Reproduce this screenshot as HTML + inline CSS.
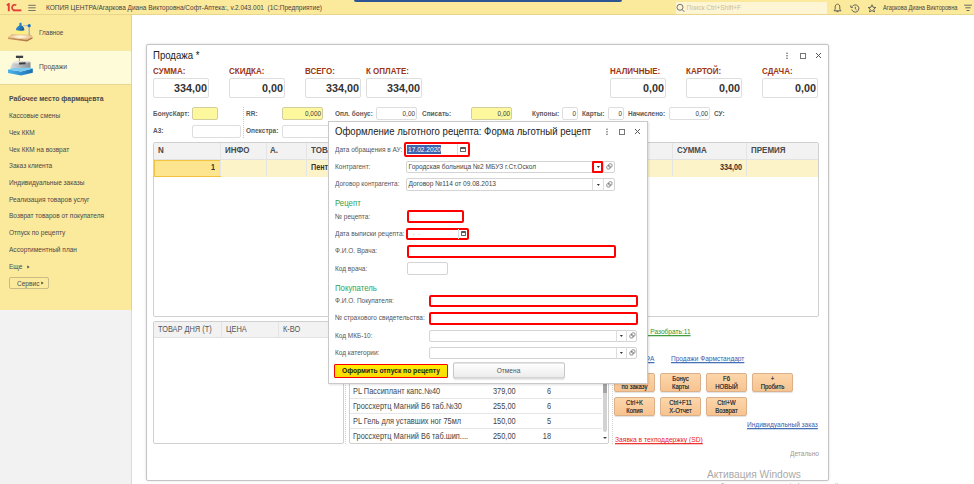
<!DOCTYPE html>
<html><head><meta charset="utf-8">
<style>
*{margin:0;padding:0;box-sizing:border-box}
html,body{width:974px;height:484px;overflow:hidden;background:#fff;font-family:"Liberation Sans",sans-serif;color:#333}
.a{position:absolute;white-space:nowrap}
#top{left:0;top:0;width:974px;height:15px;background:#fbe99c;border-bottom:1px solid #e9d68b}
#side{left:0;top:15px;width:132px;height:295px;background:#fbe99c;border-right:1px solid #e6d48e}
#sidegrey{left:0;top:310px;width:132px;height:174px;background:#f2f2f2;border-right:1px solid #e3dcb8}
.si{position:absolute;left:9px;font-size:6.55px;color:#4a4a4a;line-height:8px}
.box{position:absolute;background:#fff;border:1px solid #dedede;border-radius:2px}
.yb{background:#fdf79e;border-color:#d2cf9c}
.lbl{position:absolute;font-size:6.5px;color:#5a5a5a;font-weight:bold;line-height:8px}
.red{position:absolute;color:#9c3714;font-weight:bold;font-size:8px;line-height:9px}
.big{position:absolute;font-size:10.8px;font-weight:bold;color:#333;text-align:right;line-height:12px}
.sv{position:absolute;font-size:6.4px;color:#444;text-align:right;line-height:8px}
.th{position:absolute;top:146.5px;font-size:8px;font-weight:bold;color:#4a4a4a;line-height:8px}
.th2{position:absolute;top:326px;font-size:7.4px;color:#555;line-height:8px}
.td{position:absolute;top:164px;font-size:7.2px;font-weight:bold;color:#333;line-height:8px}
.rt{position:absolute;font-size:7.4px;color:#444;line-height:8px}
.lnk{position:absolute;font-size:6.55px;line-height:8px;text-decoration:underline;text-decoration-thickness:0.6px;text-underline-offset:0.8px}
.btn{position:absolute;width:41px;height:19px;border:1px solid #dcb088;border-radius:2px;background:linear-gradient(#fcd6aa,#f7c391);box-shadow:0 1px 1px rgba(0,0,0,0.12);font-size:6px;line-height:6.8px;text-align:center;color:#333;padding-top:2.3px;text-shadow:0 0 0.4px #555}
.btn .ts{transform-origin:0 50%}
.dl{position:absolute;left:335px;font-size:6.5px;color:#555;line-height:8px}
.dv{position:absolute;font-size:6.6px;color:#444;line-height:8px}
.rb{position:absolute;border:2px solid #ff0000;border-radius:2px;background:#fff}
.ib{position:absolute;border:1px solid #d4d4d4;border-radius:2px;background:#fff}
.gh{position:absolute;left:335px;font-size:7.8px;color:#35a050;line-height:9px}
.arr{position:absolute;width:0;height:0;border-left:1.6px solid transparent;border-right:1.6px solid transparent;border-top:1.8px solid #333}
.lk{position:absolute;width:5px;height:5px;border:1px solid #777;border-radius:1px;box-shadow:1.5px -1.5px 0 -0.5px #fff,1.5px -1.5px 0 0 #777}
.cal{position:absolute;width:5.5px;height:5px;border:1px solid #666;border-top:2px solid #555;border-radius:1px}
.t{transform:scaleY(1.15);transform-origin:0 80%}
.t.big{transform:scaleY(1.04)}
.ts{display:inline-block;transform:scaleY(1.15);transform-origin:0 80%}
</style></head><body>
<!-- top bar -->
<div class="a" id="top"></div>
<div class="a" style="left:354px;top:0;width:268px;height:2px;background:#2d5594;border-radius:0 0 3px 3px"></div>
<svg class="a" style="left:6px;top:3px" width="16" height="9" viewBox="0 0 16 9"><path d="M0.8 2.3L2.8 1V8.2" stroke="#e2413a" stroke-width="1.9" fill="none"/><path d="M10.3 2.2A2.8 2.8 0 1 0 8.2 7.3" stroke="#e2413a" stroke-width="1.7" fill="none"/><rect x="7.4" y="6.4" width="8" height="1.9" fill="#e2413a"/></svg>
<svg class="a" style="left:28px;top:4px" width="8" height="8" viewBox="0 0 8 8"><path d="M0.3 1.3H7.7M0.3 3.8H7.7M0.3 6.5H7.7" stroke="#666" stroke-width="0.9"/></svg>
<div class="t a" style="left:46px;top:4px;font-size:6.5px;color:#444;line-height:8px;white-space:pre">КОПИЯ ЦЕНТРА/Агаркова Диана Викторовна/Софт-Аптека:, v.2.043.001  (1С:Предприятие)</div>
<div class="a" style="left:676px;top:2px;width:151px;height:12px;background:#fdf5d4"></div>
<div class="t a" style="left:686.5px;top:4px;font-size:6.5px;color:#c8c0a0;line-height:8px">Поиск Ctrl+Shift+F</div>
<div class="t a" style="left:883px;top:4px;font-size:5.7px;color:#444;line-height:8px">Агаркова Диана Викторовна</div>


<svg class="a" style="left:833px;top:3px" width="9" height="10" viewBox="0 0 9 10"><path d="M4.5 1.2C2.8 1.2 2.2 2.6 2.2 4V6.2L1 7.8H8L6.8 6.2V4C6.8 2.6 6.2 1.2 4.5 1.2Z" stroke="#555" stroke-width="0.9" fill="none"/><path d="M3.5 8.6H5.5" stroke="#555" stroke-width="0.9"/></svg>
<svg class="a" style="left:850px;top:3.5px" width="10" height="9" viewBox="0 0 10 9"><path d="M2.2 2.6A3.6 3.6 0 1 1 1.8 5.5" stroke="#555" stroke-width="0.9" fill="none"/><path d="M0.8 1.4V3.4H2.8" stroke="#555" stroke-width="0.9" fill="none"/><path d="M5.3 2.8V4.8L6.6 6" stroke="#555" stroke-width="0.9" fill="none"/></svg>
<svg class="a" style="left:867px;top:3.5px" width="10" height="9" viewBox="0 0 10 9"><path d="M5 0.8L6.1 3.3L8.8 3.5L6.8 5.2L7.4 7.9L5 6.5L2.6 7.9L3.2 5.2L1.2 3.5L3.9 3.3Z" stroke="#555" stroke-width="0.9" fill="none" stroke-linejoin="round"/></svg>
<svg class="a" style="left:964px;top:4px" width="8" height="8" viewBox="0 0 8 8"><path d="M0.2 1.2H7.8M1.4 3.8H6.6M2.6 6.5H5.4" stroke="#555" stroke-width="0.9"/></svg>
<svg class="a" style="left:676px;top:3px" width="9" height="10" viewBox="0 0 9 10"><circle cx="4" cy="4.3" r="3" stroke="#666" stroke-width="0.9" fill="none"/><path d="M6.1 6.5L8.3 8.8" stroke="#666" stroke-width="1"/></svg>

<!-- sidebar -->
<div class="a" id="side"></div>
<div class="a" style="left:0;top:50px;width:131px;height:35px;background:#fdfbd8;border-bottom:1px solid #e6d690;border-top:1px solid #f6eaa8"></div>
<div class="a" id="sidegrey"></div>

<svg class="a" style="left:4px;top:18px" width="34" height="26" viewBox="0 0 34 26">
<defs><radialGradient id="gl" cx="0.5" cy="0.45" r="0.55"><stop offset="0" stop-color="#fffef4"/><stop offset="0.45" stop-color="#f6dfb8"/><stop offset="1" stop-color="#dcaa72"/></radialGradient>
<linearGradient id="sh" x1="0" y1="0" x2="1" y2="0.6"><stop offset="0" stop-color="#8fd0f0"/><stop offset="0.45" stop-color="#2a86c8"/><stop offset="1" stop-color="#1a5c9c"/></linearGradient>
<linearGradient id="fr" x1="0" y1="0" x2="1" y2="0"><stop offset="0" stop-color="#d09a62"/><stop offset="1" stop-color="#a87040"/></linearGradient></defs>
<path d="M12 12L20.4 12.2L21.5 16.8L10 16.6Z" fill="#fff46a" opacity="0.6"/>
<path d="M4 19.2L23 21.8L28.5 19L28.5 20.6L23 23.6L4 20.9Z" fill="url(#fr)"/>
<path d="M4 19.2L8 16.3L27 16.8L28.5 19L23 21.8Z" fill="url(#gl)"/>
<path d="M25.2 8.5V17" stroke="#a0a8b4" stroke-width="1.1"/>
<path d="M19 7.7H24" stroke="#b0b8c4" stroke-width="1.1"/>
<circle cx="25.2" cy="7.7" r="1.6" fill="#1f72b8"/>
<path d="M11.8 12C12 9.8 13.5 8.3 15.3 7.5V5.2C15.3 4.7 17.6 4.7 17.6 5.2V7.5C19.2 8.3 20.4 10 20.4 12.2C17.5 13 14.5 12.8 11.8 12Z" fill="url(#sh)"/>
</svg>
<svg class="a" style="left:4px;top:52px" width="34" height="26" viewBox="0 0 34 26">
<defs><linearGradient id="bd" x1="0" y1="0" x2="1" y2="0"><stop offset="0" stop-color="#d8d9da"/><stop offset="0.5" stop-color="#b4b6b8"/><stop offset="1" stop-color="#8a8e92"/></linearGradient>
<linearGradient id="bs" x1="0" y1="0" x2="1" y2="0"><stop offset="0" stop-color="#4cb4ec"/><stop offset="1" stop-color="#1a70b2"/></linearGradient></defs>
<rect x="11.9" y="3.7" width="7.2" height="2.3" fill="#3c3f42"/>
<path d="M15.4 6V9.5" stroke="#a4a8ac" stroke-width="1.1"/>
<path d="M6.2 16.6L8.4 11.2L10.7 9.7L23.8 8.9L26.5 10.2L26.5 16.4L17 18.2Z" fill="url(#bd)"/>
<path d="M8.4 11.2L10.7 9.7L23.8 8.9L26.5 10.2L22 10.8L12 11.6Z" fill="#e6e7e8"/>
<path d="M15.1 10.6L21.8 10.2L21.2 12.2L15 12.4Z" fill="#3a3a3a"/>
<path d="M4 17.6L17 19.5L28.8 16.4V20.8L17 23.6L4 21.1Z" fill="url(#bs)"/>
<path d="M4 17.6L8.5 16.3L26 15.6L28.8 16.4L17 19.5Z" fill="#7cccf2"/>
</svg>
<div class="t a" style="left:39px;top:29px;font-size:6.4px;color:#4a4a4a;line-height:8px">Главное</div>
<div class="t a" style="left:39px;top:63px;font-size:6.7px;color:#4a4a4a;line-height:8px">Продажи</div>
<div class="t si" style="top:95.3px;font-weight:bold;font-size:6.9px">Рабочее место фармацевта</div>
<div class="t si" style="top:112.0px">Кассовые смены</div>
<div class="t si" style="top:128.7px">Чек ККМ</div>
<div class="t si" style="top:145.5px">Чек ККМ на возврат</div>
<div class="t si" style="top:162.2px">Заказ клиента</div>
<div class="t si" style="top:178.9px">Индивидуальные заказы</div>
<div class="t si" style="top:195.6px">Реализация товаров услуг</div>
<div class="t si" style="top:212.3px">Возврат товаров от покупателя</div>
<div class="t si" style="top:229.1px">Отпуск по рецепту</div>
<div class="t si" style="top:245.8px">Ассортиментный план</div>
<div class="t si" style="top:262.5px">Еще</div><svg class="a" style="left:26.5px;top:264.5px" width="3" height="4" viewBox="0 0 3 4"><path d="M0.3 0.4L2.6 2L0.3 3.6Z" fill="#444"/></svg>
<div class="a" style="left:9px;top:277px;width:40px;height:12px;border:1px solid #c9bb86;border-radius:2px;background:#fbe99c"></div>
<div class="t si" style="left:17px;top:279.5px">Сервис</div><svg class="a" style="left:41px;top:281.3px" width="3" height="4" viewBox="0 0 3 4"><path d="M0.3 0.4L2.6 2L0.3 3.6Z" fill="#444"/></svg>

<!-- main form window -->
<div class="a" style="left:146px;top:44px;width:683px;height:436.8px;border:1px solid #c4c4c4;border-radius:2px;box-shadow:0 0 3px rgba(0,0,0,0.12);background:#fff"></div>
<div class="t a" style="left:153px;top:50px;font-size:9.6px;color:#222;line-height:11px">Продажа *</div>

<div class="t red" style="left:153px;top:67px">СУММА:</div>
<div class="t red" style="left:229px;top:67px">СКИДКА:</div>
<div class="t red" style="left:305px;top:67px">ВСЕГО:</div>
<div class="t red" style="left:366px;top:67px">К ОПЛАТЕ:</div>
<div class="t red" style="left:610px;top:67px">НАЛИЧНЫЕ:</div>
<div class="t red" style="left:686px;top:67px">КАРТОЙ:</div>
<div class="t red" style="left:762px;top:67px">СДАЧА:</div>

<div class="box" style="left:153px;top:78px;width:56px;height:20px"></div>
<div class="box" style="left:229px;top:78px;width:56px;height:20px"></div>
<div class="box" style="left:305px;top:78px;width:56px;height:20px"></div>
<div class="box" style="left:366px;top:78px;width:56px;height:20px"></div>
<div class="box" style="left:610px;top:78px;width:56px;height:20px"></div>
<div class="box" style="left:686px;top:78px;width:56px;height:20px"></div>
<div class="box" style="left:762px;top:78px;width:56px;height:20px"></div>
<div class="t big" style="left:153px;top:82px;width:54px">334,00</div>
<div class="t big" style="left:229px;top:82px;width:54px">0,00</div>
<div class="t big" style="left:305px;top:82px;width:54px">334,00</div>
<div class="t big" style="left:366px;top:82px;width:54px">334,00</div>
<div class="t big" style="left:610px;top:82px;width:54px">0,00</div>
<div class="t big" style="left:686px;top:82px;width:54px">0,00</div>
<div class="t big" style="left:762px;top:82px;width:54px">0,00</div>

<!-- field row 1 -->
<div class="t lbl" style="left:153px;top:110px">БонусКарт:</div>
<div class="box yb" style="left:192px;top:107px;width:26px;height:13px"></div>
<div class="a" style="left:243px;top:107px;height:31px;border-left:1px dotted #c8c8c8"></div>
<div class="t lbl" style="left:246px;top:110px">RR:</div>
<div class="box yb" style="left:282px;top:107px;width:41px;height:13px"></div>
<div class="t sv" style="left:282px;top:110px;width:39px">0,000</div>
<div class="t lbl" style="left:335px;top:110px">Опл. бонус:</div>
<div class="box" style="left:376px;top:107px;width:41px;height:13px"></div>
<div class="t sv" style="left:376px;top:110px;width:39px">0,00</div>
<div class="t lbl" style="left:422px;top:110px">Списать:</div>
<div class="box yb" style="left:471px;top:107px;width:41px;height:13px"></div>
<div class="t sv" style="left:471px;top:110px;width:39px">0,00</div>
<div class="t lbl" style="left:532px;top:110px">Купоны:</div>
<div class="box" style="left:562px;top:107px;width:16px;height:13px"></div>
<div class="t sv" style="left:562px;top:110px;width:14px">0</div>
<div class="t lbl" style="left:582px;top:110px">Карты:</div>
<div class="box" style="left:608px;top:107px;width:16px;height:13px"></div>
<div class="t sv" style="left:608px;top:110px;width:14px">0</div>
<div class="t lbl" style="left:628px;top:110px">Начислено:</div>
<div class="box" style="left:669px;top:107px;width:41px;height:13px"></div>
<div class="t sv" style="left:669px;top:110px;width:39px">0,00</div>
<div class="t lbl" style="left:714px;top:110px">СУ:</div>
<!-- field row 2 -->
<div class="t lbl" style="left:153px;top:127px">А3:</div>
<div class="box" style="left:192px;top:125px;width:49px;height:13px"></div>
<div class="t lbl" style="left:246px;top:127px">Опекстра:</div>
<div class="box" style="left:282px;top:125px;width:60px;height:13px"></div>


<!-- main table -->
<div class="a" style="left:153px;top:142px;width:666px;height:175px;border:1px solid #d0d0d0;border-radius:2px;background:#fff"></div>
<div class="a" style="left:154px;top:143px;width:664px;height:17px;background:#f2f2f2;border-bottom:1px solid #e2e2e2"></div>
<div class="a" style="left:154px;top:160px;width:664px;height:17px;background:#fdf3c8"></div>
<div class="a" style="left:153.5px;top:159.5px;width:67px;height:17.5px;background:#fde58f;border:1.5px solid #f4c440"></div>
<div class="a" style="left:220px;top:143px;width:1px;height:33px;background:#e4e4e4"></div>
<div class="a" style="left:266px;top:143px;width:1px;height:33px;background:#e4e4e4"></div>
<div class="a" style="left:306px;top:143px;width:1px;height:33px;background:#e4e4e4"></div>
<div class="a" style="left:672px;top:143px;width:1px;height:33px;background:#e4e4e4"></div>
<div class="a" style="left:746px;top:143px;width:1px;height:33px;background:#e4e4e4"></div>
<div class="t th" style="left:158px">N</div>
<div class="t th" style="left:225px">ИНФО</div>
<div class="t th" style="left:270px">А.</div>
<div class="t th" style="left:311px">ТОВАР</div>
<div class="t th" style="left:677px">СУММА</div>
<div class="t th" style="left:751px">ПРЕМИЯ</div>
<div class="t td" style="left:179px;width:36px;text-align:right">1</div>
<div class="t td" style="left:311px">Пентал</div>
<div class="t td" style="left:700px;width:42px;text-align:right">334,00</div>

<!-- lower left table -->
<div class="a" style="left:153px;top:321px;width:191px;height:123px;border:1px solid #d0d0d0;border-radius:2px;background:#fff"></div>
<div class="a" style="left:154px;top:322px;width:189px;height:16px;background:#f2f2f2;border-bottom:1px solid #e2e2e2"></div>
<div class="a" style="left:221px;top:322px;width:1px;height:15px;background:#e4e4e4"></div>
<div class="a" style="left:278px;top:322px;width:1px;height:15px;background:#e4e4e4"></div>
<div class="t th2" style="left:158px">ТОВАР ДНЯ (Т)</div>
<div class="t th2" style="left:226px">ЦЕНА</div>
<div class="t th2" style="left:283px">К-ВО</div>
<div class="a" style="left:345px;top:321px;height:123px;border-left:1px dotted #cfcfcf"></div>

<!-- lower right table -->
<div class="a" style="left:349px;top:340px;width:260px;height:104px;border:1px solid #d0d0d0;border-radius:2px;background:#fff"></div>
<div class="a" style="left:350px;top:398px;width:252px;height:1px;background:#e6e6e6"></div>
<div class="a" style="left:350px;top:413px;width:252px;height:1px;background:#e6e6e6"></div>
<div class="a" style="left:350px;top:428px;width:252px;height:1px;background:#e6e6e6"></div>
<div class="t rt" style="left:353px;top:388px">PL Пассиплант капс.№40</div>
<div class="t rt" style="left:493px;top:388px">379,00</div>
<div class="t rt" style="left:530px;top:388px;width:21px;text-align:right">6</div>
<div class="t rt" style="left:353px;top:403px">Гроссхертц Магний В6 таб.№30</div>
<div class="t rt" style="left:493px;top:403px">255,00</div>
<div class="t rt" style="left:530px;top:403px;width:21px;text-align:right">6</div>
<div class="t rt" style="left:353px;top:418px">PL Гель для уставших ног 75мл</div>
<div class="t rt" style="left:493px;top:418px">150,00</div>
<div class="t rt" style="left:530px;top:418px;width:21px;text-align:right">5</div>
<div class="t rt" style="left:353px;top:433px">Гроссхертц Магний В6 таб.шип....</div>
<div class="t rt" style="left:493px;top:433px">250,00</div>
<div class="t rt" style="left:530px;top:433px;width:21px;text-align:right">18</div>
<div class="a" style="left:603px;top:341px;width:3.6px;height:91px;background:#d2d2d2;border-radius:0 0 2px 2px"></div>
<div class="a" style="left:603px;top:341px;width:3.6px;height:52px;background:#a4a4a4"></div>
<div class="a" style="left:603px;top:437px;width:0;height:0;border-left:2px solid transparent;border-right:2px solid transparent;border-top:2px solid #444"></div>
<div class="a" style="left:611.5px;top:340px;height:104px;border-left:1px dotted #d4d4d4"></div>

<!-- links & buttons -->
<div class="t lnk" style="left:616px;top:328px;color:#2f932f">Отложено: Разобрать:11</div>
<div class="t lnk" style="left:611px;top:355px;color:#3464b0">Продажи ОФА</div>
<div class="t lnk" style="left:671px;top:355px;color:#3464b0">Продажи Фармстандарт</div>
<div class="btn" style="left:614px;top:373px"><span class="ts">Отпуск<br>по заказу</span></div>
<div class="btn" style="left:660px;top:373px"><span class="ts">Бонус<br>Карты</span></div>
<div class="btn" style="left:706px;top:373px"><span class="ts">F6<br>НОВЫЙ</span></div>
<div class="btn" style="left:752px;top:373px"><span class="ts">+<br>Пробить</span></div>
<div class="btn" style="left:614px;top:397px"><span class="ts">Ctrl+K<br>Копия</span></div>
<div class="btn" style="left:660px;top:397px"><span class="ts">Ctrl+F11<br>X-Отчет</span></div>
<div class="btn" style="left:706px;top:397px"><span class="ts">Ctrl+W<br>Возврат</span></div>
<div class="t lnk" style="left:747px;top:421px;color:#3464b0">Индивидуальный заказ</div>
<div class="t lnk" style="left:615px;top:435.5px;color:#e8231e;font-size:6.7px">Заявка в техподдержку (SD)</div>
<div class="t lnk" style="left:790px;top:450px;color:#9a9a9a;text-decoration:none">Детально</div>

<!-- form header icons -->
<svg class="a" style="left:785px;top:52px" width="4" height="8" viewBox="0 0 4 8"><circle cx="2" cy="1.3" r="0.75" fill="#555"/><circle cx="2" cy="3.8" r="0.75" fill="#555"/><circle cx="2" cy="6.3" r="0.75" fill="#555"/></svg>
<svg class="a" style="left:800px;top:53px" width="7" height="7" viewBox="0 0 7 7"><rect x="0.5" y="0.5" width="5" height="5" stroke="#777" stroke-width="1" fill="none"/></svg>
<svg class="a" style="left:815px;top:52px" width="7" height="7" viewBox="0 0 7 7"><path d="M1 1L6 6M6 1L1 6" stroke="#555" stroke-width="1"/></svg>

<!-- watermark -->
<div class="t a" style="left:707px;top:469px;font-size:10.2px;color:#aaa;line-height:12px">Активация Windows</div>
<div class="t a" style="left:707px;top:483.5px;font-size:7.7px;color:#aaa;line-height:8px">Чтобы активировать Windows, перейдите в раздел "Параметры".</div>


<!-- dialog -->
<div class="a" style="left:328px;top:120.5px;width:320px;height:263.5px;border:1px solid #c9c9c9;background:#fff;box-shadow:1px 1px 2px rgba(0,0,0,0.12)"></div>
<div class="t a" style="left:335px;top:126px;font-size:9.6px;color:#222;line-height:11px">Оформление льготного рецепта: Форма льготный рецепт</div>
<svg class="a" style="left:604.5px;top:128px" width="4" height="8" viewBox="0 0 4 8"><circle cx="2" cy="1.3" r="0.75" fill="#555"/><circle cx="2" cy="3.8" r="0.75" fill="#555"/><circle cx="2" cy="6.3" r="0.75" fill="#555"/></svg>
<svg class="a" style="left:619px;top:129px" width="7" height="7" viewBox="0 0 7 7"><rect x="0.5" y="0.5" width="5" height="5" stroke="#777" stroke-width="1" fill="none"/></svg>
<svg class="a" style="left:634px;top:128px" width="7" height="7" viewBox="0 0 7 7"><path d="M1 1L6 6M6 1L1 6" stroke="#555" stroke-width="1"/></svg>

<div class="t dl" style="top:146px">Дата обращения в АУ:</div>
<div class="rb" style="left:404px;top:141.5px;width:66px;height:15.2px"></div>
<div class="a" style="left:407px;top:145px;width:34px;height:8.5px;background:#3d63ae"></div>
<div class="t dv" style="left:408px;top:146px;color:#fff">17.02.2020</div>
<div class="a" style="left:456.5px;top:144px;width:1px;height:11px;background:#ddd"></div>
<div class="cal" style="left:460px;top:147px"></div>

<div class="t dl" style="top:163px">Контрагент:</div>
<div class="ib" style="left:406px;top:160.5px;width:209px;height:12.5px"></div>
<div class="t dv" style="left:408.5px;top:163px">Городская больница №2 МБУЗ г.Ст.Оскол</div>
<div class="a" style="left:592px;top:161px;width:11px;height:12px;border:2px solid #ff0000;border-radius:1px"></div>
<svg class="a" style="left:595.5px;top:165.0px" width="5" height="4" viewBox="0 0 5 4"><path d="M0.9 1.1H3.9L2.4 2.9Z" fill="#333"/></svg>
<div class="a" style="left:603px;top:161px;width:1px;height:11.5px;background:#ddd"></div>
<svg class="a" style="left:606.0px;top:163.0px" width="7" height="7" viewBox="0 0 7 7"><rect x="0.8" y="2.6" width="3.4" height="3.4" rx="1" stroke="#777" stroke-width="0.8" fill="#fff"/><rect x="2.6" y="0.8" width="3.4" height="3.4" rx="1" stroke="#777" stroke-width="0.8" fill="none"/></svg>

<div class="t dl" style="top:180px">Договор контрагента:</div>
<div class="ib" style="left:406px;top:178px;width:209px;height:12.5px"></div>
<div class="t dv" style="left:408.5px;top:180px">Договор №114 от 09.08.2013</div>
<div class="a" style="left:592px;top:178.5px;width:1px;height:11.5px;background:#ddd"></div>
<svg class="a" style="left:595.5px;top:182.5px" width="5" height="4" viewBox="0 0 5 4"><path d="M0.9 1.1H3.9L2.4 2.9Z" fill="#333"/></svg>
<div class="a" style="left:603px;top:178.5px;width:1px;height:11.5px;background:#ddd"></div>
<svg class="a" style="left:606.0px;top:180.5px" width="7" height="7" viewBox="0 0 7 7"><rect x="0.8" y="2.6" width="3.4" height="3.4" rx="1" stroke="#777" stroke-width="0.8" fill="#fff"/><rect x="2.6" y="0.8" width="3.4" height="3.4" rx="1" stroke="#777" stroke-width="0.8" fill="none"/></svg>

<div class="t gh" style="top:199px">Рецепт</div>
<div class="t dl" style="top:213px">№ рецепта:</div>
<div class="rb" style="left:407px;top:210px;width:57px;height:12.5px"></div>
<div class="t dl" style="top:230px">Дата выписки рецепта:</div>
<div class="rb" style="left:406px;top:227.5px;width:63px;height:12.5px"></div>
<div class="t dv" style="left:411px;top:229px;color:#999">&nbsp;.&nbsp;&nbsp;.</div>
<div class="a" style="left:458px;top:229px;width:1px;height:9.5px;background:#ddd"></div>
<div class="cal" style="left:460.5px;top:231px"></div>
<div class="t dl" style="top:247px">Ф.И.О. Врача:</div>
<div class="rb" style="left:407px;top:244.5px;width:209px;height:13.5px"></div>
<div class="t dl" style="top:264.5px">Код врача:</div>
<div class="ib" style="left:407px;top:262px;width:41px;height:12.5px"></div>

<div class="t gh" style="top:283.5px">Покупатель</div>
<div class="t dl" style="top:297px">Ф.И.О. Покупателя:</div>
<div class="rb" style="left:428.5px;top:294.5px;width:209px;height:12.5px"></div>
<div class="t dl" style="top:314.2px">№ страхового свидетельства:</div>
<div class="rb" style="left:428.5px;top:312px;width:209px;height:12.5px"></div>
<div class="t dl" style="top:332px">Код МКБ-10:</div>
<div class="ib" style="left:429px;top:329.5px;width:208px;height:12.5px"></div>
<div class="a" style="left:615.5px;top:330px;width:1px;height:11.5px;background:#ddd"></div>
<svg class="a" style="left:619.0px;top:334.0px" width="5" height="4" viewBox="0 0 5 4"><path d="M0.9 1.1H3.9L2.4 2.9Z" fill="#333"/></svg>
<div class="a" style="left:626px;top:330px;width:1px;height:11.5px;background:#ddd"></div>
<svg class="a" style="left:628.5px;top:332.0px" width="7" height="7" viewBox="0 0 7 7"><rect x="0.8" y="2.6" width="3.4" height="3.4" rx="1" stroke="#777" stroke-width="0.8" fill="#fff"/><rect x="2.6" y="0.8" width="3.4" height="3.4" rx="1" stroke="#777" stroke-width="0.8" fill="none"/></svg>
<div class="t dl" style="top:349.2px">Код категории:</div>
<div class="ib" style="left:429px;top:346.5px;width:208px;height:12.5px"></div>
<div class="a" style="left:615.5px;top:347px;width:1px;height:11.5px;background:#ddd"></div>
<svg class="a" style="left:619.0px;top:351.0px" width="5" height="4" viewBox="0 0 5 4"><path d="M0.9 1.1H3.9L2.4 2.9Z" fill="#333"/></svg>
<div class="a" style="left:626px;top:347px;width:1px;height:11.5px;background:#ddd"></div>
<svg class="a" style="left:628.5px;top:349.0px" width="7" height="7" viewBox="0 0 7 7"><rect x="0.8" y="2.6" width="3.4" height="3.4" rx="1" stroke="#777" stroke-width="0.8" fill="#fff"/><rect x="2.6" y="0.8" width="3.4" height="3.4" rx="1" stroke="#777" stroke-width="0.8" fill="none"/></svg>

<div class="a" style="left:334px;top:363.5px;width:114px;height:14px;border:1.6px solid #ff0000;border-radius:1px;background:linear-gradient(#ffec00,#f7dc00);font-size:6.7px;font-weight:bold;color:#222;line-height:12px;text-align:center"><span class="ts">Оформить отпуск по рецепту</span></div>
<div class="t a" style="left:452.5px;top:363.5px;width:112px;height:14px;border:1px solid #c8c8c8;border-radius:2px;background:linear-gradient(#fff,#ececec);font-size:6.6px;color:#555;line-height:11.5px;text-align:center;box-shadow:0 1px 1px rgba(0,0,0,0.1)">Отмена</div>

</body></html>
